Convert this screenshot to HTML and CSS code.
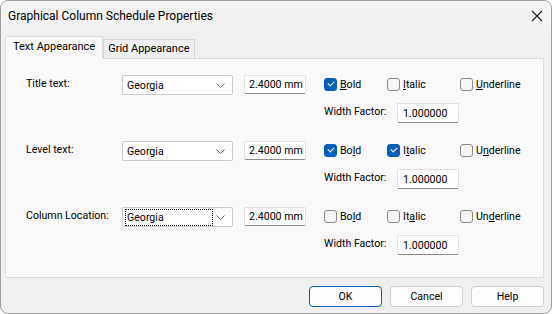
FILE: index.html
```html
<!DOCTYPE html>
<html lang="en">
<head>
<meta charset="UTF-8" />
<title>Graphical Column Schedule Properties</title>
<link rel="stylesheet" href="styles.css">
</head>
<body>
  <div class="dialog">
    <div class="titlebar">
      <span class="title">Graphical Column Schedule Properties</span>
      <svg class="close" width="12" height="12" viewBox="0 0 12 12"><path d="M1 1 L11 11 M11 1 L1 11" stroke="#1a1a1a" stroke-width="1.1" fill="none"/></svg>
    </div>
    <div class="body">
      <div class="tabs">
        <div class="tab active">Text Appearance</div>
        <div class="tab">Grid Appearance</div>
      </div>
      <div class="panel">

        <div class="group">
          <div class="lbl">Title text:</div>
          <div class="combo">
            <span class="combo-text">Georgia</span>
            <svg class="chev" width="9" height="5" viewBox="0 0 9 5"><path d="M0.5 0.5 L4.5 4.5 L8.5 0.5" stroke="#6a6a6a" fill="none"/></svg>
          </div>
          <div class="edit size">2.4000 mm</div>
          <div class="styles">
            <div class="checks">
              <div class="check w63"><span class="box on"></span><span><u>B</u>old</span></div>
              <div class="check w73"><span class="box"></span><span><u>I</u>talic</span></div>
              <div class="check"><span class="box"></span><span><u>U</u>nderline</span></div>
            </div>
            <div class="factor">
              <span class="factor-lbl">Width Factor:</span>
              <div class="edit num">1.000000</div>
            </div>
          </div>
        </div>

        <div class="group">
          <div class="lbl">Level text:</div>
          <div class="combo">
            <span class="combo-text">Georgia</span>
            <svg class="chev" width="9" height="5" viewBox="0 0 9 5"><path d="M0.5 0.5 L4.5 4.5 L8.5 0.5" stroke="#6a6a6a" fill="none"/></svg>
          </div>
          <div class="edit size">2.4000 mm</div>
          <div class="styles">
            <div class="checks">
              <div class="check w63"><span class="box on"></span><span>Bo<u>l</u>d</span></div>
              <div class="check w73"><span class="box on"></span><span>I<u>t</u>alic</span></div>
              <div class="check"><span class="box"></span><span>U<u>n</u>derline</span></div>
            </div>
            <div class="factor">
              <span class="factor-lbl">Width Factor:</span>
              <div class="edit num">1.000000</div>
            </div>
          </div>
        </div>

        <div class="group">
          <div class="lbl">Column Location:</div>
          <div class="combo">
            <span class="combo-text focus">Georgia</span>
            <svg class="chev" width="9" height="5" viewBox="0 0 9 5"><path d="M0.5 0.5 L4.5 4.5 L8.5 0.5" stroke="#6a6a6a" fill="none"/></svg>
          </div>
          <div class="edit size">2.4000 mm</div>
          <div class="styles">
            <div class="checks">
              <div class="check w63"><span class="box"></span><span>Bo<u>l</u>d</span></div>
              <div class="check w73"><span class="box"></span><span>It<u>a</u>lic</span></div>
              <div class="check"><span class="box"></span><span>Un<u>d</u>erline</span></div>
            </div>
            <div class="factor">
              <span class="factor-lbl">Width Factor:</span>
              <div class="edit num">1.000000</div>
            </div>
          </div>
        </div>

      </div>
      <div class="buttons">
        <button class="btn default">OK</button>
        <button class="btn">Cancel</button>
        <button class="btn">Help</button>
      </div>
    </div>
  </div>
</body>
</html>
```

FILE: styles.css
```css
* {
  box-sizing: border-box;
}
html, body {
  margin: 0;
  padding: 0;
  background: #ffffff;
}
body {
  font-family: Roboto, "Noto Sans", sans-serif;
  font-size: 10.6px;
  color: #000;
}
.dialog {
  width: 552px;
  height: 314px;
  border: 1px solid #9c9c9c;
  border-radius: 8px;
  background: #f0f0f0;
  overflow: hidden;
  display: flex;
  flex-direction: column;
}
.titlebar {
  height: 30px;
  background: #f3f3f3;
  display: flex;
  align-items: center;
  justify-content: space-between;
  padding: 0 8px 1px 7px;
}
.title {
  font-size: 12px;
}
.close {
  display: block;
}
.body {
  flex: 1;
  padding: 5px 7px 0 4px;
}
/* Tabs */
.tabs {
  display: flex;
  align-items: flex-end;
  height: 22px;
  position: relative;
  z-index: 1;
  font-size: 11px;
}
.tab {
  height: 19px;
  padding: 0 4px 0 4px;
  border: 1px solid #d9d9d9;
  border-bottom: none;
  background: #f0f0f0;
  line-height: 18px;
  white-space: nowrap;
}
.tab.active {
  padding: 0 7px 0 7px;
  background: #f9f9f9;
  border-color: #dcdcdc;
  line-height: 19px;
  margin-bottom: -1px;
  height: 23px;
}
.panel {
  height: 220px;
  background: #f9f9f9;
  border: 1px solid #dcdcdc;
  padding: 16px 0 0 20px;
  display: flex;
  flex-direction: column;
  gap: 18px;
}
/* Rows */
.group {
  display: flex;
  align-items: flex-start;
}
.lbl {
  width: 96px;
  line-height: 14px;
  padding-top: 2px;
  white-space: nowrap;
}
.combo {
  width: 111px;
  height: 20px;
  border: 1px solid #cccccc;
  border-radius: 2px;
  background: #ffffff;
  display: flex;
  align-items: center;
  justify-content: space-between;
  padding: 0 7px 0 2px;
}
.combo-text {
  padding: 0 1px;
  line-height: 15px;
  width: 88px;
  border: 1px dotted transparent;
}
.combo-text.focus {
  border-color: #000;
}
.chev {
  display: block;
}
.edit {
  height: 19px;
  background: #ffffff;
  border: 1px solid #e2e2e2;
  border-bottom-color: #8c8c8c;
  border-radius: 2px;
  line-height: 17px;
  white-space: nowrap;
}
.size {
  width: 62px;
  margin-left: 11px;
  padding-left: 4px;
}
.styles {
  margin-left: 18px;
  display: flex;
  flex-direction: column;
  gap: 8px;
}
.checks {
  display: flex;
  height: 18px;
  align-items: center;
}
.check {
  display: flex;
  align-items: center;
  gap: 3px;
  white-space: nowrap;
}
.w63 {
  width: 63px;
}
.w73 {
  width: 73px;
}
.box {
  width: 13px;
  height: 13px;
  border: 1px solid #8a8a8a;
  border-radius: 3px;
  background: #f6f6f6;
  display: inline-block;
  position: relative;
}
.box.on {
  background: #005fb8;
  border-color: #005fb8;
}
.box.on::after {
  content: "";
  position: absolute;
  left: 3px;
  top: 2px;
  width: 5px;
  height: 3px;
  border-left: 1px solid #fff;
  border-bottom: 1px solid #fff;
  transform: rotate(-45deg);
}
.factor {
  display: flex;
  align-items: flex-start;
  margin-top: 2px;
}
.factor-lbl {
  width: 73px;
  line-height: 14px;
  padding-top: 2px;
  white-space: nowrap;
}
.num {
  width: 62px;
  height: 20px;
  padding-left: 5px;
  line-height: 20px;
}
/* Buttons */
.buttons {
  display: flex;
  justify-content: flex-end;
  gap: 8px;
  padding: 8px 0 0 0;
}
.btn {
  width: 73px;
  height: 21px;
  font-family: inherit;
  font-size: 10.6px;
  color: #000;
  background: #fdfdfd;
  border: 1px solid #d0d0d0;
  border-radius: 4px;
  padding: 0;
}
.btn.default {
  border-color: #005fb8;
}
```
